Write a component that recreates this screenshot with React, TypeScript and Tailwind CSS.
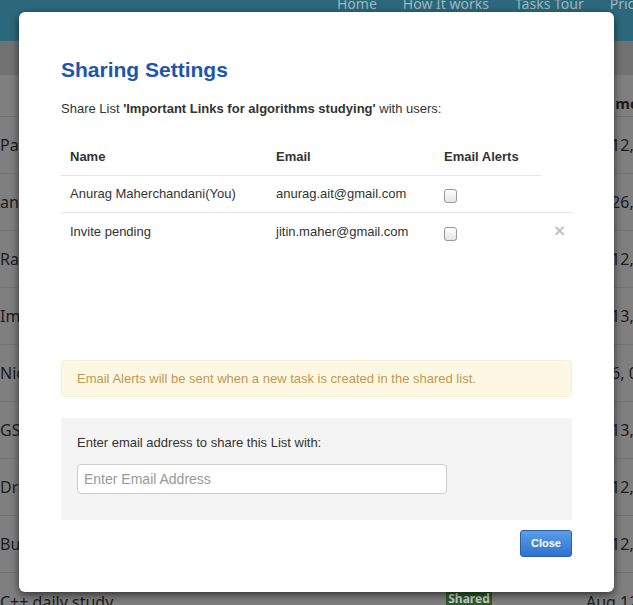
import React from "react";

const rows = [
  { name: "Paisa tracker", date: "Aug 12, 2017" },
  { name: "anurag tasks", date: "Aug 26, 2017" },
  { name: "Raag practice", date: "Aug 12, 2017" },
  { name: "Important Links", date: "Aug 13, 2017" },
  { name: "Nice things", date: "Aug 6, 0217" },
  { name: "GST notes", date: "Aug 13, 2017" },
  { name: "Drafts", date: "Aug 12, 2017" },
  { name: "Budget", date: "Aug 12, 2017" },
];

function Checkbox() {
  return (
    <span className="inline-block w-[13px] h-[14px] mt-[3px] rounded-[3px] border border-[#9a9a9a] bg-gradient-to-b from-[#ffffff] to-[#e4e4e4] align-middle" />
  );
}

export default function App() {
  return (
    <div className="relative w-[633px] h-[605px] overflow-hidden bg-[#7f7f7f] font-['Noto_Sans',sans-serif]">
      {/* background page (dimmed) */}
      <div className="h-[41px] bg-[#2c687b] flex items-start">
        <div className="ml-[337px] flex gap-[26px] -mt-[7px] text-[14px] text-[#9fb7bf] whitespace-nowrap">
          <span className="shrink-0">Home</span>
          <span className="shrink-0">How It works</span>
          <span className="shrink-0">Tasks Tour</span>
          <span className="shrink-0">Pricing</span>
        </div>
      </div>
      <div className="h-[34px] bg-[#727272]" />
      <div className="h-[42px] pt-[16px] border-b border-[#747474]">
        <span className="ml-[580px] text-[15px] font-bold text-[#1b1b1b] whitespace-nowrap">Last modified</span>
      </div>
      {rows.map((r) => (
        <div key={r.name} className="h-[57px] border-b border-[#747474] flex items-center text-[16px] text-[#1b1b1b] whitespace-nowrap">
          <span className="w-[577px] shrink-0">{r.name}</span>
          <span className="shrink-0">{r.date}</span>
        </div>
      ))}
      <div className="h-[57px] flex items-center text-[16px] text-[#1b1b1b] whitespace-nowrap">
        <span className="w-[446px] shrink-0">C++ daily study</span>
        <span className="shrink-0 w-[46px] -mt-[6px] text-center bg-[#2c5a2a] text-[#c8d0c8] text-[12px] font-bold rounded-[2px]">Shared</span>
        <span className="shrink-0 ml-[94px]">Aug 12, 2017</span>
      </div>

      {/* modal */}
      <div className="absolute left-[19px] top-[12px] w-[595px] h-[580px] bg-white rounded-[6px] shadow-[0_3px_9px_rgba(0,0,0,0.6)] px-[42px] pt-[46px] font-['Liberation_Sans',Arial,sans-serif] text-[13px] text-[#333333]">
        <h3 className="text-[21px] leading-[24px] font-bold text-[#1c56ad]">Sharing Settings</h3>
        <p className="mt-[18px] leading-[18px]">
          Share List <b>'Important Links for algorithms studying'</b> with users:
        </p>
        <div className="mt-[20px] h-[222px]">
          <table className="border-collapse text-left">
            <thead>
              <tr>
                <th className="w-[207px] pl-[9px] pt-[10px] pb-[9px] leading-[18px] border-b border-[#e6e6e6] font-bold">Name</th>
                <th className="w-[168px] pl-[8px] pt-[10px] pb-[9px] leading-[18px] border-b border-[#e6e6e6] font-bold">Email</th>
                <th className="w-[105px] pl-[8px] pt-[10px] pb-[9px] leading-[18px] border-b border-[#e6e6e6] font-bold">Email Alerts</th>
              </tr>
            </thead>
            <tbody>
              <tr>
                <td className="pl-[9px] py-[9px] leading-[18px]">Anurag Maherchandani(You)</td>
                <td className="pl-[8px] py-[9px] leading-[18px]">anurag.ait@gmail.com</td>
                <td className="pl-[8px] py-[9px] leading-[18px]"><Checkbox /></td>
              </tr>
              <tr>
                <td className="pl-[9px] py-[9px] leading-[18px] border-t border-[#e6e6e6]">Invite pending</td>
                <td className="pl-[8px] py-[9px] leading-[18px] border-t border-[#e6e6e6]">jitin.maher@gmail.com</td>
                <td className="pl-[8px] py-[9px] leading-[18px] border-t border-[#e6e6e6]"><Checkbox /></td>
                <td className="w-[31px] pl-[6px] py-[9px] leading-[18px] border-t border-[#e6e6e6] text-center">
                  <span className="text-[#c4c4c4] text-[19px] font-bold leading-[18px]">×</span>
                </td>
              </tr>
            </tbody>
          </table>
        </div>
        <div className="h-[37px] flex items-center px-[15px] bg-[#fcf8e3] border border-[#fbeed5] rounded-[4px] text-[#c09853]">
          Email Alerts will be sent when a new task is created in the shared list.
        </div>
        <div className="mt-[21px] h-[102px] bg-[#f4f4f4] px-[16px] pt-[16px]">
          <div className="leading-[18px]">Enter email address to share this List with:</div>
          <input
            className="mt-[12px] w-[370px] h-[30px] border border-[#cccccc] rounded-[4px] bg-white px-[6px] text-[14px] placeholder:text-[#999999] outline-none"
            placeholder="Enter Email Address"
          />
        </div>
        <div className="mt-[10px] flex justify-end">
          <button className="w-[52px] h-[27px] rounded-[3px] border border-[#2c5fa8] bg-gradient-to-b from-[#5a9ee6] to-[#2f72cf] text-white text-[11px] font-bold">
            Close
          </button>
        </div>
      </div>
    </div>
  );
}
